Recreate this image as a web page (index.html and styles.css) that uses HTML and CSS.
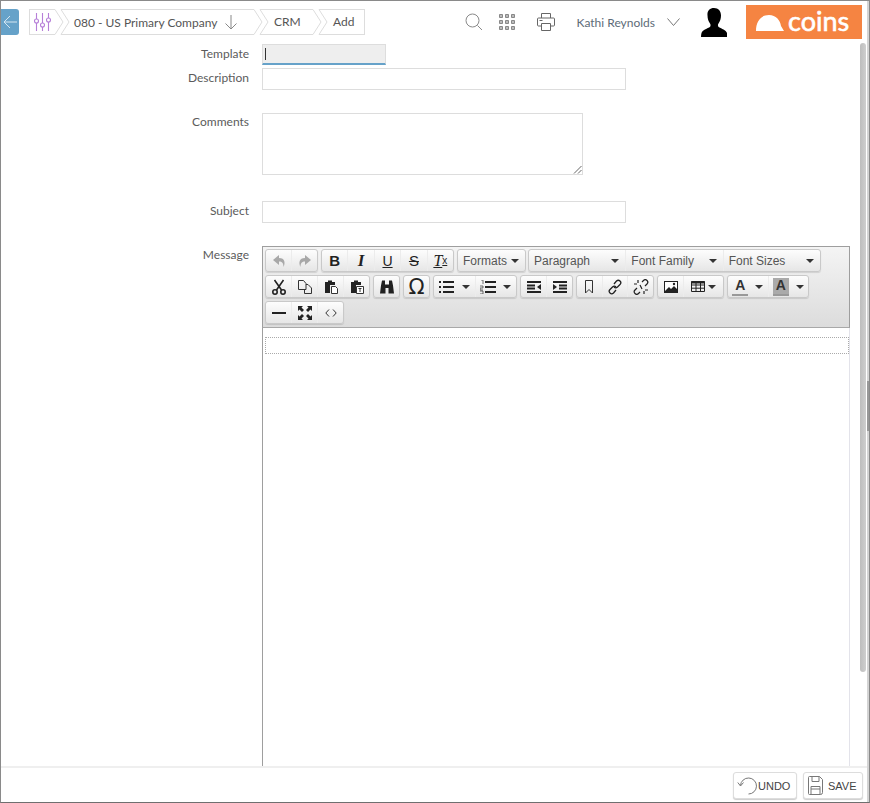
FILE: index.html
```html
<!DOCTYPE html>
<html lang="en">
<head>
    <meta charset="UTF-8">
    <title>CRM - Add</title>
    <link rel="stylesheet" href="styles.css">
</head>
<body>

<div class="app">
    <div class="topbar">
        <a class="back">
            <svg width="14" height="14" viewBox="0 0 14 14"><path d="M14 7H1M7 1L1 7l6 6" fill="none" stroke="#d5e6f1"/></svg>
        </a>
        <div class="crumbs">
            <div class="crumb crumb-first">
                <svg width="20" height="20" viewBox="0 0 20 20" fill="none" stroke="#b67fd8" stroke-width="1.1">
                    <path d="M3.5 1v6M3.5 11v8M9.5 1v10M9.5 15v4M15.5 1v5M15.5 10v9"/>
                    <circle cx="3.5" cy="9" r="2"/><circle cx="9.5" cy="13" r="2"/><circle cx="15.5" cy="8" r="2"/>
                </svg>
            </div>
            <svg class="sep" width="15" height="26" viewBox="0 0 15 26"><path d="M0 .5L8 13 0 25.5M6 25.5L14 13 6 .5H15M6 25.5H15"/></svg>
            <div class="crumb crumb-company">
                <span>080 - US Primary Company</span>
                <svg width="14" height="16" viewBox="0 0 14 16"><path d="M7 1v14M1.500 9.500L7 15l5.500-5.500" fill="none" stroke="#888"/></svg>
            </div>
            <svg class="sep" width="15" height="26" viewBox="0 0 15 26"><path d="M0 .5L8 13 0 25.5M6 25.5L14 13 6 .5H15M6 25.5H15"/></svg>
            <div class="crumb crumb-crm">CRM</div>
            <svg class="sep" width="15" height="26" viewBox="0 0 15 26"><path d="M0 .5L8 13 0 25.5M6 25.5L14 13 6 .5H15M6 25.5H15"/></svg>
            <div class="crumb crumb-add">Add</div>
        </div>
        <div class="top-right">
            <svg class="ic-search" width="18" height="18" viewBox="0 0 18 18" fill="none" stroke="#8a8a8a"><circle cx="7.500" cy="7.500" r="6.500"/><path d="M12.500 12.500L17 17"/></svg>
            <svg class="ic-apps" width="16" height="16" viewBox="0 0 16 16" fill="#bbb" stroke="#888">
                <path d="M.5.500h3v3h-3zM6.500.500h3v3h-3zM12.500.500h3v3h-3zM.5 6.500h3v3h-3zM6.500 6.500h3v3h-3zM12.500 6.500h3v3h-3zM.5 12.500h3v3h-3zM6.500 12.500h3v3h-3zM12.500 12.500h3v3h-3z"/>
            </svg>
            <svg class="ic-print" width="18" height="18" viewBox="0 0 18 18" fill="none" stroke="#666"><path d="M4.500 5V.5h9V5M4.500 13H1.500a1 1 0 0 1-1-1V6a1 1 0 0 1 1-1h15a1 1 0 0 1 1 1v6a1 1 0 0 1-1 1h-3M4.500 10.500h9v7h-9zM2.500 7.500h3"/></svg>
            <span class="user-name">Kathi Reynolds</span>
            <svg class="ic-chevron" width="13" height="8" viewBox="0 0 13 8"><path d="M.5.500l6 7 6-7" fill="none" stroke="#777"/></svg>
            <svg class="ic-user" width="26" height="29" viewBox="0 0 26 29"><path d="M13 0c4.500 0 7 3 7 7.500 0 3-1 6-2.500 8-.8 1.200-.8 3 .5 3.800 2.500 1.400 7 2.700 8 5.700.3 1.500.5 2.500.5 4H0c0-1.500.2-2.500.5-4 1-3 5.500-4.300 8-5.700 1.300-.8 1.300-2.600.5-3.800-1.500-2-2.500-5-2.500-8C6 3 8.500 0 13 0z" fill="#000"/></svg>
            <div class="logo">
                <svg width="28" height="16" viewBox="0 0 28 16"><path d="M0 16C0 6 5 0 13 0c7 0 11 5 12 11l3 5z" fill="#fff"/></svg>
                <span>coins</span>
            </div>
        </div>
    </div>

    <div class="content">
        <form class="form">
            <label class="lbl lbl-template">Template</label>
            <div class="field-wrap"><div class="input template-input"><i class="caret"></i></div></div>

            <label class="lbl lbl-description">Description</label>
            <div class="field-wrap"><div class="input wide description-input"></div></div>

            <label class="lbl lbl-comments">Comments</label>
            <div class="field-wrap">
                <div class="textarea">
                    <svg class="grip" width="9" height="9" viewBox="0 0 9 9"><path d="M8.500 1L1 8.500M8.500 5L5 8.500" stroke="#666" fill="none"/></svg>
                </div>
            </div>

            <label class="lbl lbl-subject">Subject</label>
            <div class="field-wrap"><div class="input wide subject-input"></div></div>

            <label class="lbl lbl-message">Message</label>
            <div class="editor">
                <div class="toolbar">
                    <div class="tb-row">
                        <div class="group g-history">
                            <button type="button" class="btn"><svg width="14" height="14" viewBox="0 0 14 14"><path d="M7 4V1L1 6l6 5V7.500c3 0 4.500 1.500 4.500 5.500 2-4 1.500-9-4.500-9z" fill="#a8a8a8"/></svg></button>
                            <button type="button" class="btn"><svg width="14" height="14" viewBox="0 0 14 14"><path d="M7 4V1l6 5-6 5V7.500c-3 0-4.500 1.500-4.500 5.500-2-4-1.500-9 4.500-9z" fill="#a8a8a8"/></svg></button>
                        </div>
                        <div class="group g-format">
                            <button type="button" class="btn fmt fmt-b">B</button>
                            <button type="button" class="btn fmt fmt-i">I</button>
                            <button type="button" class="btn fmt fmt-u">U</button>
                            <button type="button" class="btn fmt fmt-s">S</button>
                            <button type="button" class="btn fmt fmt-clear">T<small>x</small></button>
                        </div>
                        <div class="group g-formats">
                            <button type="button" class="btn menu">Formats<i class="arr"></i></button>
                        </div>
                        <div class="group g-selects">
                            <button type="button" class="btn menu">Paragraph<i class="arr"></i></button>
                            <button type="button" class="btn menu">Font Family<i class="arr"></i></button>
                            <button type="button" class="btn menu">Font Sizes<i class="arr"></i></button>
                        </div>
                    </div>
                    <div class="tb-row">
                        <div class="group g-clip">
                            <button type="button" class="btn"><svg width="16" height="16" viewBox="0 0 16 16" fill="none" stroke="#222" stroke-width="1.600"><path d="M3.500 1l7 10M12.500 1l-7 10"/><circle cx="4" cy="13" r="2.200"/><circle cx="12" cy="13" r="2.200"/></svg></button>
                            <button type="button" class="btn"><svg width="16" height="16" viewBox="0 0 16 16" fill="none" stroke="#333"><path d="M1.500 1.500h5l2.500 3v6h-7.500zM9 5.500h2l3.500 3.500v5.500h-7v-4"/></svg></button>
                            <button type="button" class="btn"><svg width="16" height="16" viewBox="0 0 16 16"><path d="M2 3h3V1.500h4V3h3v3H7v8H2z" fill="#222"/><path d="M8.500 7.500h4l2 2v5h-6z" fill="#fff" stroke="#333"/></svg></button>
                            <button type="button" class="btn"><svg width="16" height="16" viewBox="0 0 16 16"><path d="M2 3h3V1.500h4V3h3v3H7v8H2z" fill="#222"/><path d="M7.500 7.500h7v7h-7z" fill="#fff" stroke="#333"/><path d="M9.500 9.500h3M11 9.500v3.500" stroke="#333" fill="none"/></svg></button>
                        </div>
                        <div class="group g-one">
                            <button type="button" class="btn"><svg width="16" height="16" viewBox="0 0 16 16"><path d="M3 1.500h3v4h4v-4h3l1 5 1 8H9.500V9h-3v5.500H1l1-8z" fill="#222"/></svg></button>
                        </div>
                        <div class="group g-one">
                            <button type="button" class="btn fmt fmt-omega">Ω</button>
                        </div>
                        <div class="group g-lists">
                            <button type="button" class="btn split"><svg width="16" height="14" viewBox="0 0 16 14"><path d="M4 2h11M4 7h11M4 12h11" stroke="#222" stroke-width="2"/><path d="M0 1h2v2H0zM0 6h2v2H0zM0 11h2v2H0z" fill="#222"/></svg><i class="arr"></i></button>
                            <button type="button" class="btn split"><svg width="16" height="14" viewBox="0 0 16 14"><path d="M5 2h11M5 7h11M5 12h11" stroke="#222" stroke-width="2"/><path d="M1 0h2v4M0 6h3v2H0v2h3M0 11h3v3H0" stroke="#333" stroke-width=".7" fill="none"/></svg><i class="arr"></i></button>
                        </div>
                        <div class="group g-indent">
                            <button type="button" class="btn"><svg width="16" height="14" viewBox="0 0 16 14"><path d="M1 2h14M1 12h14M1 5.500h8M1 8.500h8" stroke="#222" stroke-width="2"/><path d="M11 7l4-3v6z" fill="#222"/></svg></button>
                            <button type="button" class="btn"><svg width="16" height="14" viewBox="0 0 16 14"><path d="M1 2h14M1 12h14M7 5.500h8M7 8.500h8" stroke="#222" stroke-width="2"/><path d="M5 7L1 4v6z" fill="#222"/></svg></button>
                        </div>
                        <div class="group g-links">
                            <button type="button" class="btn"><svg width="10" height="14" viewBox="0 0 10 14"><path d="M1.500.5h7v12.500L5 9.500 1.500 13z" fill="none" stroke="#333"/></svg></button>
                            <button type="button" class="btn"><svg width="16" height="16" viewBox="0 0 16 16" fill="none" stroke="#222" stroke-width="1.300"><path d="M7 5l2.500-3c1-1 2.500-1 3.500 0s1 2.500 0 3.500L10.500 8c-1 1-2.500 1-3.500 0"/><path d="M9 11l-2.500 3c-1 1-2.500 1-3.500 0s-1-2.500 0-3.500L5.500 8c1-1 2.500-1 3.500 0"/></svg></button>
                            <button type="button" class="btn"><svg width="16" height="16" viewBox="0 0 16 16" fill="none" stroke="#222" stroke-width="1.200"><path d="M9 3l1.500-1.500c1-1 2.500-1 3.500 0s1 2.500 0 3.500L12 7M7 13l-1.500 1.500c-1 1-2.500 1-3.500 0s-1-2.500 0-3.500L4 9M5 1v3M1 5h3M11 15v-3M15 11h-3M7 6l2 4"/></svg></button>
                        </div>
                        <div class="group g-media">
                            <button type="button" class="btn btn-image"><svg width="14" height="12" viewBox="0 0 14 12"><path d="M0 0h14v12H0z" fill="#222"/><path d="M1 1h12v7L10 5 7 8 5 6 1 10z" fill="#fff"/><circle cx="10" cy="3" r="1.200" fill="#222"/></svg></button>
                            <button type="button" class="btn split split-table"><svg width="14" height="11" viewBox="0 0 14 11" fill="none" stroke="#222"><path d="M.5 .5h13v10H.5zM.5 4h13M.5 7.200h13M5 .5v10M9.500 .5v10"/><path d="M0 1.500h14" stroke-width="2"/></svg><i class="arr"></i></button>
                        </div>
                        <div class="group g-colors">
                            <button type="button" class="btn split"><span class="color-a">A</span><i class="arr"></i></button>
                            <button type="button" class="btn split"><span class="color-a color-back">A</span><i class="arr"></i></button>
                        </div>
                    </div>
                    <div class="tb-row">
                        <div class="group g-misc">
                            <button type="button" class="btn"><svg width="14" height="2" viewBox="0 0 14 2"><path d="M0 0h14v2H0z" fill="#222"/></svg></button>
                            <button type="button" class="btn"><svg width="14" height="14" viewBox="0 0 14 14"><path d="M0 0h5L3.500 1.500 6 4 4 6 1.500 3.500 0 5zM14 0v5l-1.500-1.500L10 6 8 4l2.500-2.500L9 0zM0 14V9l1.500 1.500L4 8l2 2-2.500 2.500L5 14zM14 14H9l1.500-1.500L8 10l2-2 2.500 2.500L14 9z" fill="#222"/></svg></button>
                            <button type="button" class="btn"><svg width="12" height="8" viewBox="0 0 12 8" fill="none" stroke="#333"><path d="M4 .5L.8 4 4 7.500M8 .5L11.200 4 8 7.500"/></svg></button>
                        </div>
                    </div>
                </div>
                <div class="edit-area"><div class="edit-block"></div></div>
            </div>
        </form>
    </div>

    <div class="bottombar">
        <button type="button" class="action action-undo">
            <svg width="21" height="21" viewBox="0 0 21 21" fill="none" stroke="#777"><path d="M3.500 10.500a8 8 0 1 1 8 8.500M.8 7.500l2.700 3.500 3-3.500"/></svg>UNDO
        </button>
        <button type="button" class="action action-save">
            <svg width="15" height="19" viewBox="0 0 15 19" fill="none" stroke="#777"><path d="M1.500.5h10l3 3v13a2 2 0 0 1-2 2h-11a1 1 0 0 1-1-1V1.500a1 1 0 0 1 1-1zM4 .5v5h7v-5M3 18.500v-8h9v8M3 13h9"/></svg>SAVE
        </button>
    </div>

    <div class="scroll-main"></div>
    <div class="scroll-outer"><div class="scroll-outer-thumb"></div></div>
</div>

</body>
</html>
```

FILE: styles.css
```css
* {
    box-sizing: border-box;
}
html, body {
    margin: 0;
    height: 100%;
    overflow: hidden;
    background: #fff;
}
body {
    font-family: "Lato", Arial, sans-serif;
    font-size: 12px;
    color: #555;
}
.app {
    position: relative;
    width: 870px;
    height: 803px;
    display: flex;
    flex-direction: column;
    border: 1px solid #8a8a8a;
    border-bottom-color: #6f6f6f;
    overflow: hidden;
}

/* top bar */
.topbar {
    display: flex;
    align-items: center;
    height: 42px;
    flex: none;
}
.back {
    display: flex;
    align-items: center;
    justify-content: center;
    width: 18px;
    height: 26px;
    background-color: #66a2c9;
    border-radius: 0 3px 3px 0;
}
.crumbs {
    display: flex;
    align-items: center;
    margin-left: 10px;
    height: 26px;
}
.crumb {
    display: flex;
    align-items: center;
    height: 26px;
    border-top: 1px solid #ddd;
    border-bottom: 1px solid #ddd;
    color: #555;
}
.crumb-first {
    width: 26px;
    padding-left: 3px;
    border-left: 1px solid #ddd;
}
.crumb-company {
    width: 184px;
    padding-left: 4px;
    gap: 7px;
}
.crumb-crm {
    width: 44px;
    padding-left: 5px;
    padding-bottom: 1px;
}
.crumb-add {
    width: 37px;
    padding-left: 5px;
    padding-bottom: 1px;
    border-right: 1px solid #ddd;
}
.sep {
    flex: none;
}
.sep path {
    fill: none;
    stroke: #ddd;
}
.top-right {
    display: flex;
    align-items: center;
    margin-left: auto;
}
.ic-search {
    margin-right: 16px;
}
.ic-apps {
    margin-right: 22px;
}
.ic-print {
    margin-right: 22px;
}
.user-name {
    color: #5d6b78;
}
.ic-chevron {
    margin-left: 12px;
    margin-right: 21px;
}
.ic-user {
    margin-right: 19px;
    margin-top: 1px;
}
.logo {
    display: flex;
    align-items: center;
    width: 116px;
    height: 34px;
    margin-right: 7px;
    padding-left: 10px;
    gap: 4px;
    background-color: #f58442;
    color: #fff;
    font-size: 27px;
}
.logo svg {
    margin-top: 1px;
}
.logo span {
    line-height: 30px;
    margin-top: -3px;
    -webkit-text-stroke: .6px #fff;
}

/* form */
.content {
    flex: 1;
    overflow: hidden;
}
.form {
    display: grid;
    grid-template-columns: 248px 1fr;
    column-gap: 13px;
    align-content: start;
    padding-top: 1px;
}
.lbl {
    text-align: right;
    color: #5b5b5b;
    line-height: 16px;
}
.lbl-template {
    padding-top: 2px;
}
.lbl-description {
    padding-top: 5px;
}
.lbl-comments {
    margin-top: 22px;
    padding-top: 2px;
}
.lbl-subject {
    margin-top: 26px;
    padding-top: 2px;
}
.lbl-message {
    margin-top: 23px;
    padding-top: 1px;
}
.input {
    height: 22px;
    border: 1px solid #ddd;
    background: #fff;
}
.wide {
    width: 364px;
}
.template-input {
    width: 124px;
    height: 21px;
    background-color: #eee;
    border-bottom: 2px solid #66a2c9;
    padding: 3px 0 0 2px;
}
.caret {
    display: block;
    width: 1px;
    height: 12px;
    background: #333;
}
.description-input {
    margin-top: 3px;
}
.textarea {
    position: relative;
    width: 321px;
    height: 62px;
    margin-top: 23px;
    border: 1px solid #ddd;
}
.grip {
    position: absolute;
    right: 0;
    bottom: 0;
}
.subject-input {
    margin-top: 26px;
}

/* editor */
.editor {
    width: 588px;
    margin-top: 23px;
    height: 521px;
}
.toolbar {
    height: 82px;
    padding: 2px 0 0 2px;
    border: 1px solid #9e9e9e;
    border-bottom-color: #a8a8a8;
    background: linear-gradient(to bottom, #f4f4f4, #dcdcdc);
}
.tb-row {
    display: flex;
    gap: 3px;
    height: 23px;
    margin-bottom: 3px;
}
.group {
    display: flex;
    height: 23px;
    border: 1px solid #c9c9c9;
    border-radius: 3px;
    box-shadow: 0 1px 1px rgba(0,0,0,.12);
    background: linear-gradient(to bottom, #fdfdfd, #e6e6e6);
    overflow: hidden;
}
.g-history { width: 53px; }
.g-format { width: 133px; }
.g-formats { width: 69px; }
.g-selects { width: 293px; margin-left: -1px; }
.g-clip { width: 105px; }
.g-one { width: 27px; }
.g-lists { width: 84px; }
.g-indent { width: 53px; }
.g-links { width: 78px; }
.g-media { width: 67px; }
.g-colors { width: 82px; }
.g-misc { width: 79px; }
.btn {
    display: flex;
    flex: 1;
    align-items: center;
    justify-content: center;
    min-width: 0;
    height: 21px;
    padding: 0;
    border: 0;
    border-right: 1px solid #ececec;
    background: transparent;
    font-family: "Liberation Sans", Arial, sans-serif;
    font-size: 12px;
    color: #555;
}
.btn:last-child {
    border-right: 0;
}
.btn-image {
    flex: none;
    width: 26px;
}
.fmt {
    font-size: 15px;
    color: #222;
}
.fmt-b {
    font-weight: 700;
    font-size: 15px;
}
.fmt-i {
    font-family: "Liberation Serif", serif;
    font-style: italic;
    font-weight: 700;
    font-size: 17px;
}
.fmt-u {
    text-decoration: underline;
    font-size: 14px;
}
.fmt-s {
    text-decoration: line-through;
    font-size: 15px;
}
.fmt-clear {
    font-family: "Liberation Serif", serif;
    font-style: italic;
    font-size: 16px;
    text-decoration: underline;
}
.fmt-clear small {
    font-size: 10px;
    font-family: "Liberation Sans", sans-serif;
    font-style: normal;
}
.fmt-omega {
    font-size: 21px;
    font-family: "DejaVu Sans", sans-serif;
}
.menu {
    justify-content: space-between;
    padding: 0 6px 0 5px;
}
.arr {
    display: block;
    width: 0;
    height: 0;
    border-left: 4px solid transparent;
    border-right: 4px solid transparent;
    border-top: 4px solid #333;
}
.split {
    gap: 7px;
}
.split-table {
    gap: 3px;
}
.color-a {
    display: block;
    width: 16px;
    padding-bottom: 1px;
    border-bottom: 2px solid #999;
    font-weight: 700;
    font-size: 14px;
    line-height: 15px;
    color: #333;
    text-align: center;
}
.color-back {
    background: #aaa;
}
.edit-area {
    height: 439px;
    border-left: 1px solid #9e9e9e;
    border-right: 1px solid #e3e3ea;
    padding: 9px 0 0 2px;
}
.edit-block {
    height: 17px;
    border: 1px dotted #aaa;
}

/* footer */
.bottombar {
    display: flex;
    justify-content: flex-end;
    gap: 6px;
    flex: none;
    height: 36px;
    padding: 4px 6px 0 0;
    border-top: 2px solid #efefef;
}
.action {
    display: flex;
    align-items: center;
    height: 27px;
    padding: 0;
    border: 1px solid #ddd;
    border-radius: 3px;
    background: #fff;
    box-shadow: 0 1px 1px rgba(0,0,0,.2);
    font-family: "Liberation Sans", Arial, sans-serif;
    font-size: 11px;
    color: #444;
}
.action-undo {
    width: 64px;
    padding-left: 3px;
}
.action-save {
    width: 60px;
    padding-left: 4px;
    gap: 5px;
}

/* scrollbars sit on top of the page */
.scroll-main {
    position: absolute;
    left: 859px;
    top: 42px;
    width: 6px;
    height: 629px;
    border-radius: 3px;
    background: linear-gradient(to right, #bdbdbd, #cfcfcf);
}
.scroll-outer {
    position: absolute;
    right: 0;
    top: 0;
    bottom: 0;
    width: 2px;
    background: #d4d4d4;
}
.scroll-outer-thumb {
    height: 50px;
    margin-top: 380px;
    background: #999;
}
```
